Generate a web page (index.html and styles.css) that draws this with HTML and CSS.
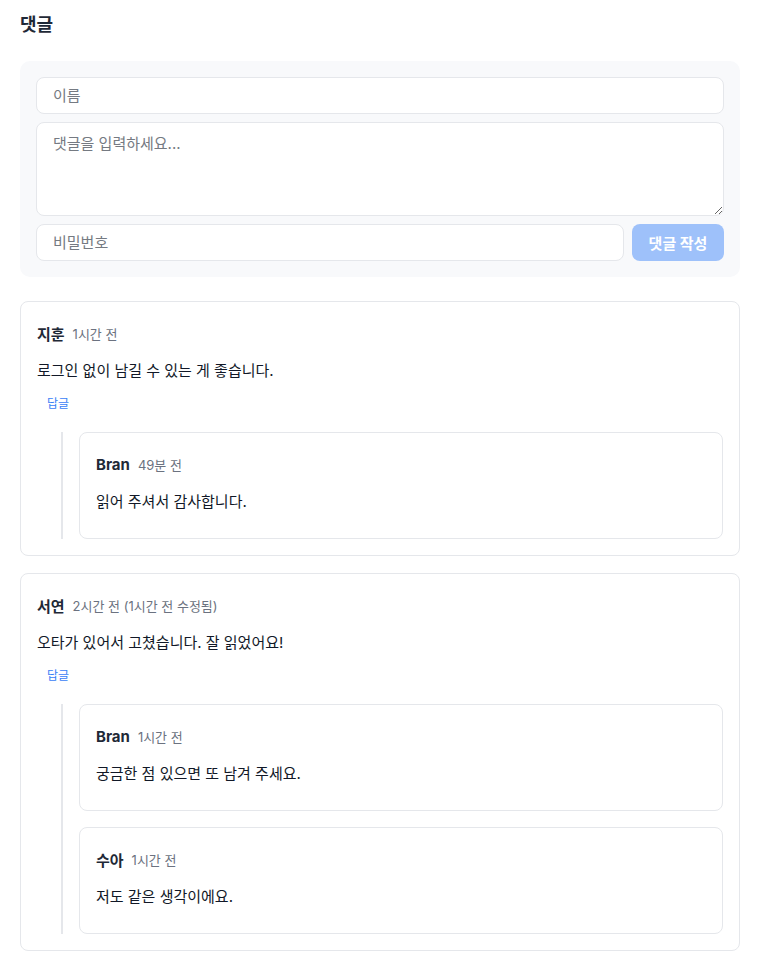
FILE: index.html
```html
<!DOCTYPE html>
<html lang="ko">

<head>
    <meta charset="utf-8">
    <meta name="viewport" content="width=device-width, initial-scale=1" />
    <title>댓글</title>
    <link rel="stylesheet" href="styles.css">
</head>

<body>
    <div class="page">
        <h2 class="title">댓글</h2>
        <form class="form">
            <input class="field" type="text" placeholder="이름">
            <textarea class="field area" placeholder="댓글을 입력하세요..."></textarea>
            <div class="formRow">
                <input class="field" type="password" placeholder="비밀번호">
                <button class="submit" type="button" disabled>댓글 작성</button>
            </div>
        </form>

        <div class="list">
            <div class="card">
                <div class="head"><span class="name">지훈</span><span class="meta">1시간 전</span></div>
                <p class="text">로그인 없이 남길 수 있는 게 좋습니다.</p>
                <button class="replyBtn" type="button">답글</button>
                <div class="replies">
                    <div class="card">
                        <div class="head"><span class="name">Bran</span><span class="meta">49분 전</span></div>
                        <p class="text">읽어 주셔서 감사합니다.</p>
                    </div>
                </div>
            </div>

            <div class="card">
                <div class="head"><span class="name">서연</span><span class="meta">2시간 전 (1시간 전 수정됨)</span></div>
                <p class="text">오타가 있어서 고쳤습니다. 잘 읽었어요!</p>
                <button class="replyBtn" type="button">답글</button>
                <div class="replies">
                    <div class="card">
                        <div class="head"><span class="name">Bran</span><span class="meta">1시간 전</span></div>
                        <p class="text">궁금한 점 있으면 또 남겨 주세요.</p>
                    </div>
                    <div class="card">
                        <div class="head"><span class="name">수아</span><span class="meta">1시간 전</span></div>
                        <p class="text">저도 같은 생각이에요.</p>
                    </div>
                </div>
            </div>
        </div>
    </div>
</body>

</html>
```

FILE: styles.css
```css
body {
    margin: 0;
    background: #fff;
    color: #111827;
    font-family: "Inter", "Noto Sans CJK KR", sans-serif;
}

.page {
    padding: 11px 20px 20px;
}

.title {
    margin: 0 0 22px;
    font-size: 18px;
    line-height: 28px;
    font-weight: 700;
    color: #1f2937;
}

.form {
    display: flex;
    flex-direction: column;
    gap: 8px;
    padding: 16px;
    background: #f8f9fb;
    border-radius: 10px;
}

.field {
    box-sizing: border-box;
    width: 100%;
    height: 37px;
    padding: 0 16px;
    border: 1px solid #e5e7eb;
    border-radius: 8px;
    background: #fff;
    font-family: inherit;
    font-size: 15px;
    color: #111827;
}

.field::placeholder {
    color: #757a82;
}

.area {
    height: 94px;
    padding: 10px 16px;
    line-height: 22px;
    resize: vertical;
}

.formRow {
    display: flex;
    gap: 8px;
}

.submit {
    flex: none;
    width: 92px;
    height: 37px;
    border: 0;
    border-radius: 8px;
    background: #9ec1fa;
    color: #fff;
    font-family: inherit;
    font-size: 15px;
    font-weight: 700;
}

.list {
    display: flex;
    flex-direction: column;
    gap: 17px;
    margin-top: 24px;
}

.card {
    padding: 16px;
    border: 1px solid #e5e7eb;
    border-radius: 8px;
    background: #fff;
}

.head {
    display: flex;
    align-items: center;
    gap: 8px;
    height: 30px;
}

.name {
    font-size: 15px;
    font-weight: 700;
    color: #1f2937;
}

.meta {
    font-size: 13px;
    color: #6b7280;
}

.text {
    margin: 11px 0 8px;
    font-size: 15px;
    line-height: 24px;
}

.replyBtn {
    display: block;
    padding: 4px 10px;
    border: 0;
    background: none;
    color: #3b82f6;
    font-family: inherit;
    font-size: 12px;
    line-height: 17px;
}

.replies {
    display: flex;
    flex-direction: column;
    gap: 16px;
    margin: 16px 0 0 24px;
    padding-left: 16px;
    border-left: 2px solid #e5e7eb;
}
```
